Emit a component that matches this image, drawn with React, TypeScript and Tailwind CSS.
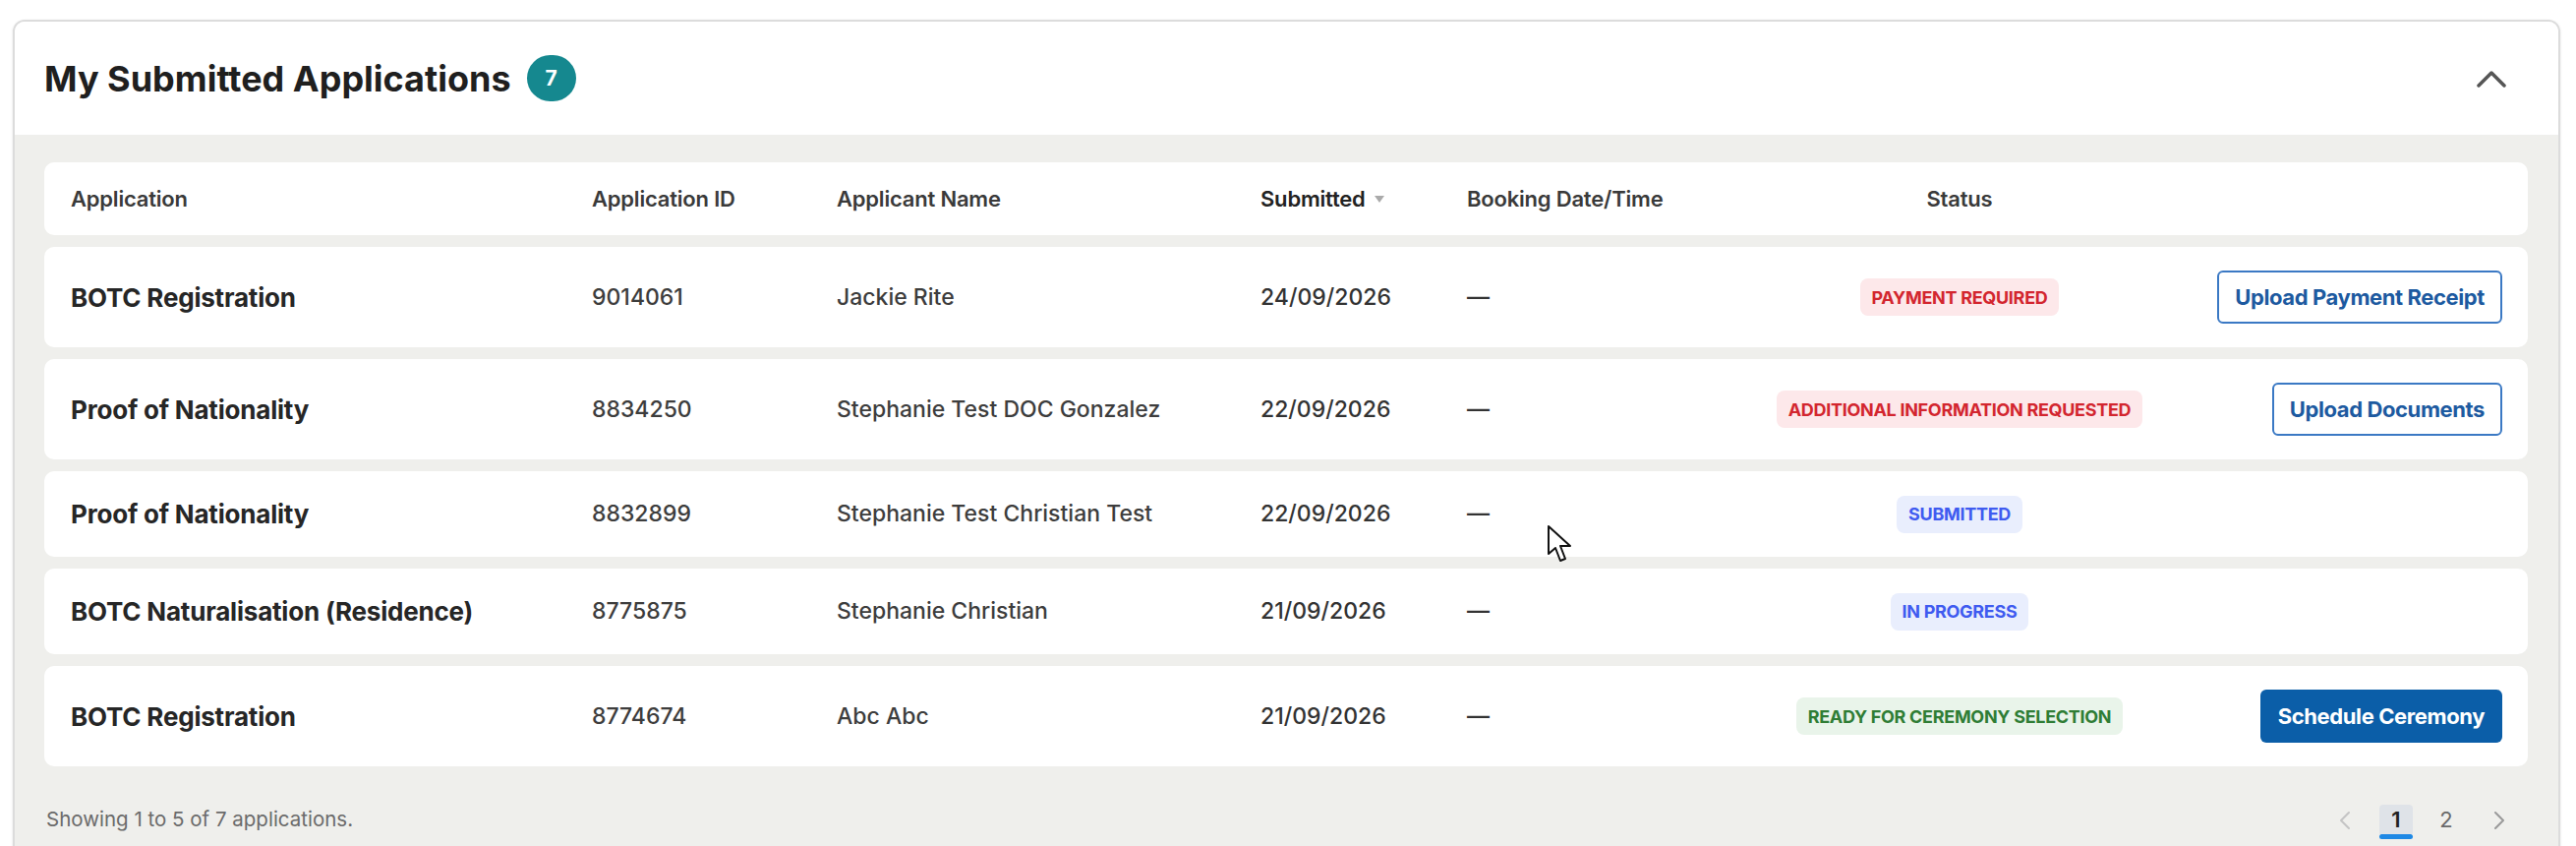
import React from "react";

type Tone = "red" | "blue" | "green";

interface Row {
  app: string;
  id: string;
  name: string;
  submitted: string;
  status: string;
  tone: Tone;
  action?: { label: string; solid?: boolean };
}

const rows: Row[] = [
  { app: "BOTC Registration", id: "9014061", name: "Jackie Rite", submitted: "24/09/2026", status: "PAYMENT REQUIRED", tone: "red", action: { label: "Upload Payment Receipt" } },
  { app: "Proof of Nationality", id: "8834250", name: "Stephanie Test DOC Gonzalez", submitted: "22/09/2026", status: "ADDITIONAL INFORMATION REQUESTED", tone: "red", action: { label: "Upload Documents" } },
  { app: "Proof of Nationality", id: "8832899", name: "Stephanie Test Christian Test", submitted: "22/09/2026", status: "SUBMITTED", tone: "blue" },
  { app: "BOTC Naturalisation (Residence)", id: "8775875", name: "Stephanie Christian", submitted: "21/09/2026", status: "IN PROGRESS", tone: "blue" },
  { app: "BOTC Registration", id: "8774674", name: "Abc Abc", submitted: "21/09/2026", status: "READY FOR CEREMONY SELECTION", tone: "green", action: { label: "Schedule Ceremony", solid: true } },
];

const toneClass: Record<Tone, string> = {
  red: "bg-[#fde8ea] text-[#d3262f]",
  blue: "bg-[#e9eefd] text-[#3f5bf0]",
  green: "bg-[#e9f4ea] text-[#2f7d35]",
};

const cols = "grid grid-cols-[530px_249px_431px_210px_288px_426px_339px] items-center";

const StatusBadge: React.FC<{ label: string; tone: Tone }> = ({ label, tone }) => (
  <span className={`inline-flex items-center h-[38px] px-[12px] rounded-[8px] text-[18px] font-bold tracking-[-0.3px] ${toneClass[tone]}`}>
    {label}
  </span>
);

const ActionButton: React.FC<{ label: string; solid?: boolean }> = ({ label, solid }) =>
  solid ? (
    <button className="h-[54px] px-[18px] rounded-[6px] bg-[#0b5ea8] text-white text-[22px] font-bold tracking-[-0.4px]">
      {label}
    </button>
  ) : (
    <button className="h-[54px] px-[16px] rounded-[6px] border-2 border-[#3b79c4] bg-white text-[#1d5aa0] text-[22px] font-bold tracking-[-0.4px]">
      {label}
    </button>
  );

const Chevron: React.FC<{ dir: "left" | "right"; color: string }> = ({ dir, color }) => (
  <svg width="12" height="20" viewBox="0 0 12 20" fill="none" stroke={color} strokeWidth="2" strokeLinecap="round" strokeLinejoin="round">
    <path d={dir === "left" ? "M10 2 L2 10 L10 18" : "M2 2 L10 10 L2 18"} />
  </svg>
);

export default function App() {
  return (
    <div className="relative min-h-[860px] bg-white pt-[20px] pl-[13px] pr-[16px] font-['Inter','Liberation_Sans',sans-serif]">
      <div className="border-2 border-[#dcdcdc] rounded-[12px] overflow-hidden shadow-sm">
        {/* Header */}
        <div className="h-[115px] bg-white flex items-center justify-between pl-[30px] pr-[52px]">
          <div className="flex items-center gap-[16px]">
            <h2 className="text-[36px] font-bold text-[#1f1f1f]">My Submitted Applications</h2>
            <span className="w-[50px] h-[47px] rounded-full bg-[#15888f] text-white text-[21px] font-bold flex items-center justify-center">
              7
            </span>
          </div>
          <svg width="32" height="20" viewBox="0 0 32 20" fill="none" stroke="#555" strokeWidth="3.5" strokeLinecap="round" strokeLinejoin="round">
            <path d="M3 17 L16 4 L29 17" />
          </svg>
        </div>

        {/* Body */}
        <div className="bg-[#efefec] pt-[28px] pl-[30px] pr-[31px] pb-[40px]">
          <div className="flex flex-col gap-[12px]">
            <div className={`${cols} h-[74px] bg-white rounded-[10px] pl-[27px] pr-[26px] text-[22px] font-semibold text-[#3a3a3a] tracking-[-0.2px]`}>
              <div>Application</div>
              <div>Application ID</div>
              <div>Applicant Name</div>
              <div className="flex items-center gap-[9px] text-[#222]">
                Submitted
                <svg width="10" height="7" viewBox="0 0 10 7">
                  <path d="M0 0 L10 0 L5 7 Z" fill="#aaaaaa" />
                </svg>
              </div>
              <div>Booking Date/Time</div>
              <div className="text-center">Status</div>
              <div />
            </div>

            {rows.map((r, i) => (
              <div key={i} className={`${cols} bg-white rounded-[10px] pl-[27px] pr-[26px] py-[24px]`}>
                <div className="text-[26px] font-bold text-[#262626] tracking-[-0.2px]">{r.app}</div>
                <div className="text-[23px] font-medium text-[#3d3d3d]">{r.id}</div>
                <div className="text-[23px] font-medium text-[#3d3d3d]">{r.name}</div>
                <div className="text-[23px] font-medium text-[#333]">{r.submitted}</div>
                <div className="text-[23px] font-medium text-[#333]">—</div>
                <div className="flex justify-center">
                  <StatusBadge label={r.status} tone={r.tone} />
                </div>
                <div className="flex justify-end min-h-[38px] items-center">
                  {r.action && <ActionButton label={r.action.label} solid={r.action.solid} />}
                </div>
              </div>
            ))}
          </div>

          {/* Footer */}
          <div className="flex items-center justify-between pt-[38px] pl-[2px] pr-[12px]">
            <div className="text-[20.5px] text-[#6b6b6b]">Showing 1 to 5 of 7 applications.</div>
            <div className="flex items-center text-[22px]">
              <span className="w-[34px] flex justify-center">
                <Chevron dir="left" color="#c4c4c4" />
              </span>
              <span className="ml-[18px] relative w-[34px] h-[32px] rounded-[4px] bg-[#dfe3e8] text-[#222] font-semibold flex items-center justify-center">
                1
                <span className="absolute left-0 right-0 -bottom-[3px] h-[5px] rounded-full bg-[#1e88e5]" />
              </span>
              <span className="ml-[17px] w-[34px] text-center text-[#6a6a6a]">2</span>
              <span className="ml-[20px] w-[34px] flex justify-center">
                <Chevron dir="right" color="#9a9a9a" />
              </span>
            </div>
          </div>
        </div>
      </div>

      {/* mouse pointer captured in the screenshot */}
      <svg className="absolute left-[1573px] top-[533px]" width="26" height="40" viewBox="0 0 26 40">
        <path d="M2 2 L2 30 L9 24 L14 37 L19 35 L14 22 L24 22 Z" fill="white" stroke="#111" strokeWidth="2" strokeLinejoin="round" />
      </svg>
    </div>
  );
}
